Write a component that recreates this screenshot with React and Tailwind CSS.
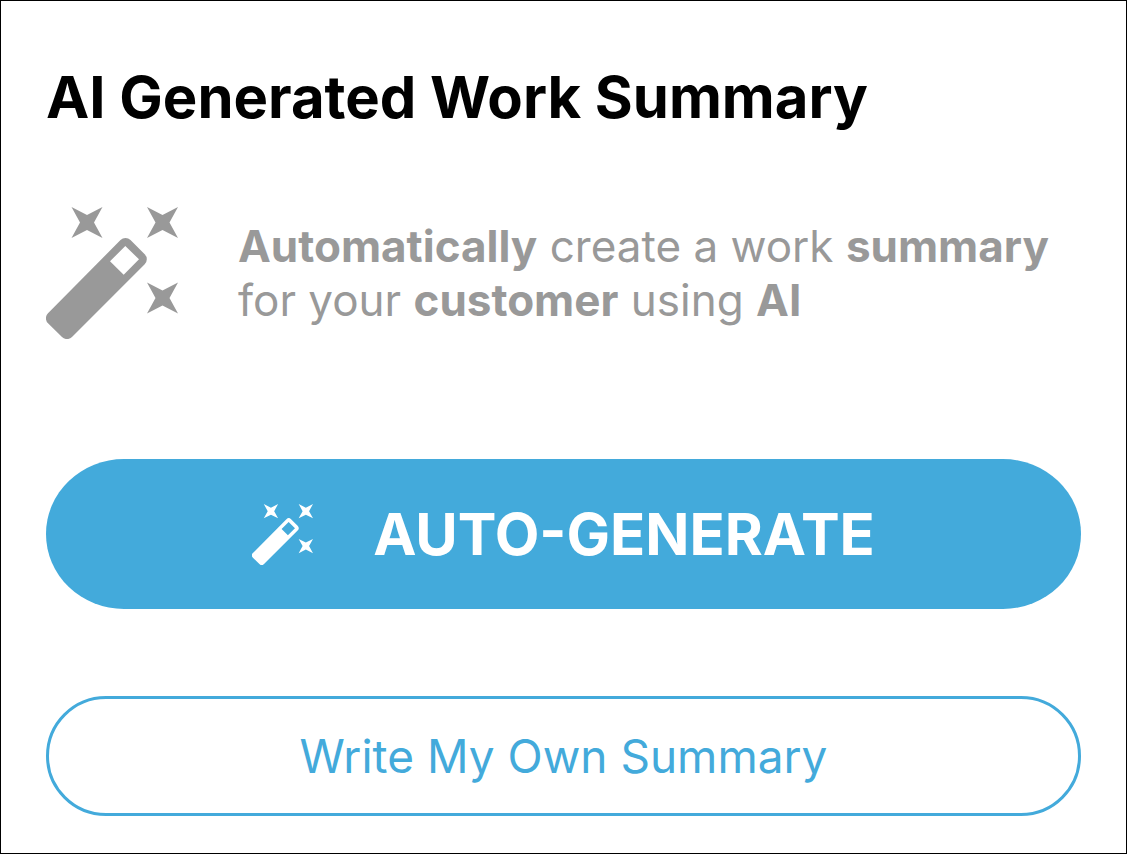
import React from 'react';

function MagicWand({ className }) {
  return (
    <svg viewBox="0 0 132 132" fill="currentColor" className={className} aria-hidden="true">
      <path d="M25.5 0 41 8 56.5 0 48 15.5 56.5 31 41 23 25.5 31 34 15.5Z" />
      <path d="M101 0 116.5 8 132 0 123.5 15.5 132 31 116.5 23 101 31 109.5 15.5Z" />
      <path d="M101 75.5 116.5 83.5 132 75.5 123.5 91 132 106.5 116.5 98.5 101 106.5 109.5 91Z" />
      <path
        fillRule="evenodd"
        d="M74.5 33A7 7 0 0 1 84.5 33L98.7 47.3A7 7 0 0 1 98.7 57.3L26 130A7 7 0 0 1 16 130L2 116.3A7 7 0 0 1 2 106.3ZM79.3 39 64 54.3 77.7 67.7 93 52.3Z"
      />
    </svg>
  );
}

export default function App() {
  return (
    <main className="min-h-screen border border-black bg-white px-[45px] pt-[60px] pb-[37px] font-['Inter',sans-serif]">
      <h1 className="text-[58px] leading-[72px] font-bold text-black">AI Generated Work Summary</h1>

      <div className="mt-[74px] flex items-center gap-[60px] text-[#999999]">
        <MagicWand className="size-[132px] shrink-0" />
        <p className="text-[44px] leading-[54px] font-normal">
          <strong className="font-bold">Automatically</strong> create a work{' '}
          <strong className="font-bold">summary</strong>
          <br />
          for your <strong className="font-bold">customer</strong> using <strong className="font-bold">AI</strong>
        </p>
      </div>

      <button
        type="button"
        className="mt-[120px] flex h-[150px] w-full items-center justify-center gap-[60px] rounded-[78px/75px] bg-[#43aadb] text-[58px] leading-[72px] font-bold text-white"
      >
        <MagicWand className="size-[61px] shrink-0" />
        AUTO-GENERATE
      </button>

      <button
        type="button"
        className="mt-[87px] flex h-[120px] w-full items-center justify-center rounded-full border-[3px] border-[#43aadb] text-[46px] leading-[56px] font-normal text-[#43aadb]"
      >
        Write My Own Summary
      </button>
    </main>
  );
}
